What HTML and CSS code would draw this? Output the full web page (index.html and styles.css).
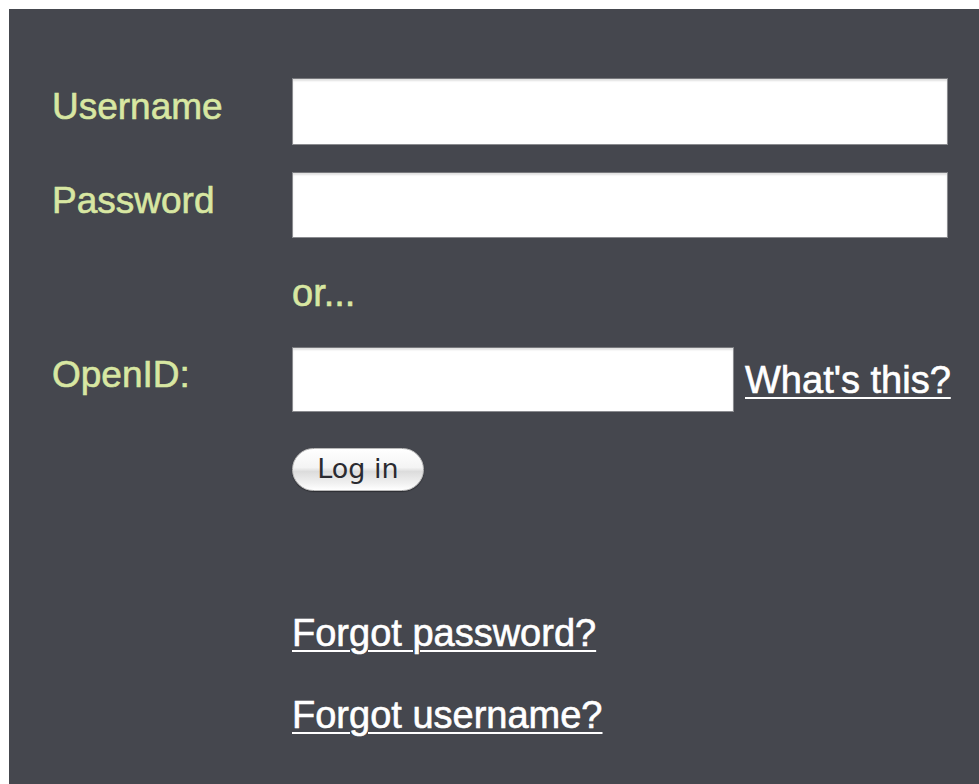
FILE: index.html
```html
<!DOCTYPE html>
<html lang="en">
<head>
<meta charset="utf-8">
<title>Log in</title>
<link rel="stylesheet" href="styles.css">
</head>
<body>
<div class="panel">
  <form class="login-form" onsubmit="return false">
    <div class="row row-user">
      <label class="label" for="username">Username</label>
      <input class="field" id="username" type="text">
    </div>
    <div class="row row-pass">
      <label class="label" for="password">Password</label>
      <input class="field" id="password" type="password">
    </div>
    <div class="row row-or">
      <span class="label"></span>
      <span class="or">or...</span>
    </div>
    <div class="row row-openid">
      <label class="label" for="openid">OpenID:</label>
      <div class="openid-wrap">
        <input class="field field-openid" id="openid" type="text">
        <a class="link" href="#">What's this?</a>
      </div>
    </div>
    <div class="row row-submit">
      <span class="label"></span>
      <button class="btn" type="submit">Log in</button>
    </div>
    <div class="links">
      <a class="link" href="#">Forgot password?</a>
      <a class="link" href="#">Forgot username?</a>
    </div>
  </form>
</div>
</body>
</html>
```
FILE: styles.css
```css
html, body {
  margin: 0;
  padding: 0;
  background: #ffffff;
}

body {
  font-family: "Liberation Sans", Arial, sans-serif;
}

.panel {
  margin: 9px 0 0 9px;
  min-height: 775px;
  background: #45474e;
  box-sizing: border-box;
  padding: 69px 0 0 43px;
}

.login-form {
  display: flex;
  flex-direction: column;
}

.row {
  display: flex;
  align-items: center;
}

.label {
  width: 240px;
  flex: none;
  color: #d8e7a2;
  font-size: 37px;
  line-height: 42px;
  margin-top: -9px;
  -webkit-text-stroke: 0.6px currentColor;
}

.field {
  display: block;
  box-sizing: border-box;
  width: 656px;
  height: 67px;
  margin: 0;
  border: 1px solid #8a8b8f;
  border-top-color: #77787c;
  background: #ffffff;
  box-shadow: inset 0 2px 2px rgba(0, 0, 0, 0.12);
  font-size: 30px;
  outline: none;
}

.row-pass {
  margin-top: 27px;
}

.row-pass .field {
  height: 66px;
}

.row-or {
  margin-top: 34px;
}

.or {
  color: #d8e7a2;
  font-size: 38px;
  line-height: 42px;
  -webkit-text-stroke: 0.6px currentColor;
}

.row-openid {
  margin-top: 33px;
}

.openid-wrap {
  display: flex;
  align-items: center;
}

.field-openid {
  width: 442px;
  height: 65px;
}

.link {
  color: #ffffff;
  font-size: 38px;
  line-height: 42px;
  text-decoration: underline;
  text-decoration-thickness: 2px;
  text-underline-offset: 4px;
  -webkit-text-stroke: 0.6px currentColor;
}

.openid-wrap .link {
  margin-left: 11px;
}

.row-submit {
  margin-top: 36px;
}

.btn {
  box-sizing: border-box;
  width: 132px;
  height: 43px;
  padding: 0 0 2px;
  border: 1px solid #b9b9b9;
  border-radius: 22px;
  background: linear-gradient(#ffffff 0%, #f4f4f4 45%, #dcdcdc 55%, #f2f2f2 85%, #ffffff 100%);
  box-shadow: 0 1px 1px rgba(0, 0, 0, 0.35);
  font-family: "DejaVu Sans", "Lucida Grande", sans-serif;
  font-size: 27px;
  color: #2a2a30;
  cursor: pointer;
}

.links {
  display: flex;
  flex-direction: column;
  align-items: flex-start;
  padding-left: 240px;
  margin-top: 121px;
  row-gap: 40px;
}
```
